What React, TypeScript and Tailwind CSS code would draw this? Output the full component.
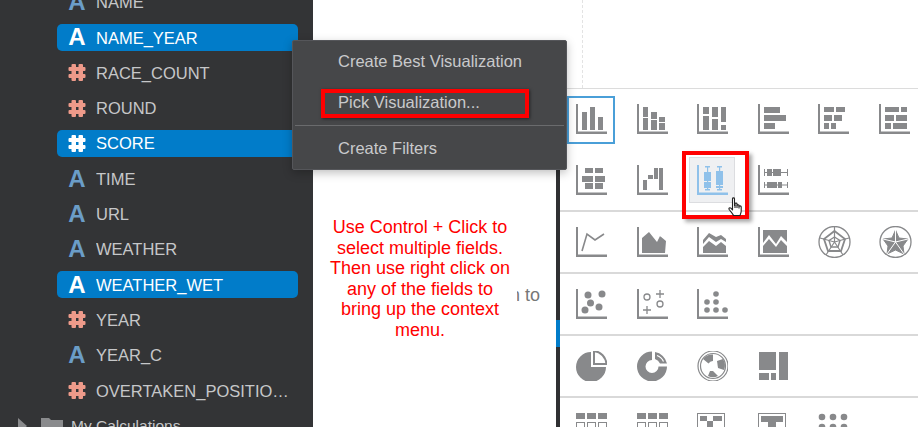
import type { ReactNode } from "react";

const fields = [
  { name: "NAME", type: "text" },
  { name: "NAME_YEAR", type: "text", selected: true },
  { name: "RACE_COUNT", type: "num" },
  { name: "ROUND", type: "num" },
  { name: "SCORE", type: "num", selected: true },
  { name: "TIME", type: "text" },
  { name: "URL", type: "text" },
  { name: "WEATHER", type: "text" },
  { name: "WEATHER_WET", type: "text", selected: true },
  { name: "YEAR", type: "num" },
  { name: "YEAR_C", type: "text" },
  { name: "OVERTAKEN_POSITIONS", type: "num" },
];

const HashIcon = ({ className }: { className: string }) => (
  <svg viewBox="0 0 17 17" className={`h-[17px] w-[18px] ${className}`} fill="currentColor">
    <rect x="3" y="0" width="4.5" height="17" rx="1" />
    <rect x="10" y="0" width="4.5" height="17" rx="1" />
    <rect x="0" y="3" width="17" height="4" rx="1" />
    <rect x="0" y="10" width="17" height="4" rx="1" />
  </svg>
);

const FieldRow = ({ name, type, selected }: { name: string; type: string; selected?: boolean }) => (
  <div className="flex h-[35.3px] shrink-0 items-center pl-[57px] pr-[15px]">
    <div className={`flex h-[27px] w-full items-center rounded-[5px] pl-[11px] pr-2 ${selected ? "bg-[#017cc9] text-white" : "text-[#c6c7c9]"}`}>
      {type === "text" ? (
        <span className={`w-[18px] text-center text-[24px] font-bold leading-none ${selected ? "text-white" : "text-[#6b9dc7]"}`}>A</span>
      ) : (
        <HashIcon className={selected ? "text-white" : "text-[#ee9a8a]"} />
      )}
      <span className="ml-[10px] min-w-0 flex-1 truncate pt-px text-[16.5px]">{name}</span>
    </div>
  </div>
);

// every chart glyph is 31x30 with the same axis unless it is a pie or radar
const ChartSvg = ({ children, axis = true, color = "#88898b" }: { children: ReactNode; axis?: boolean; color?: string }) => (
  <svg viewBox="0 0 31 30" width="31" height="30" fill={color} className="relative block">
    {axis && (
      <>
        <rect x="0" y="0" width="2" height="30" />
        <rect x="0" y="27.5" width="31" height="2.5" />
      </>
    )}
    {children}
  </svg>
);

const R = ({ b }: { b: number[][] }) => (
  <>
    {b.map(([x, y, w, h], i) => (
      <rect key={i} x={x} y={y} width={w} height={h} />
    ))}
  </>
);

const Radar = ({ filled }: { filled?: boolean }) => (
  <svg viewBox="0 0 33 32" width="33" height="32" className="relative -mt-px block" fill="none" stroke="#88898b">
    <circle cx="16.5" cy="16" r="15.5" strokeWidth="1.3" />
    {filled ? (
      <>
        <path d="M16.5 4L20 12L29 13L24 20L25 28L16.5 24L8 28L9 20L4 13L13 12Z" fill="#88898b" strokeWidth="1" />
        <path d="M16.5 4V16M29 13L16.5 16M25 28L16.5 16M8 28L16.5 16M4 13L16.5 16" stroke="#fff" strokeWidth="1" />
      </>
    ) : (
      <>
        <path d="M16.5 1V16M31 12L16.5 16M25 29L16.5 16M8 29L16.5 16M2 12L16.5 16" strokeWidth="1.2" />
        <path d="M16.5 5L27 13L23 25L10 25L6 13Z" strokeWidth="1.8" />
        <path d="M16.5 11L22 14.5L20 21L13 21L11 14.5Z" strokeWidth="1.4" />
      </>
    )}
  </svg>
);

const Cell = ({ children }: { children?: ReactNode }) => <div className="relative h-[30px] w-[31px]">{children}</div>;

const Sep = () => <div className="mt-[15px] h-[2px] bg-[#d9d9d9]" />;

const IconRow = ({ children }: { children: ReactNode }) => (
  <div className="grid grid-cols-[repeat(6,31px)] gap-x-[29.5px] gap-y-[31px] pl-4 pt-[15px]">{children}</div>
);

const HandCursor = () => (
  <svg viewBox="0 0 16 20" width="16" height="20" className="block" fill="#fff" stroke="#222" strokeWidth="1.1" strokeLinejoin="round">
    <path d="M4.5 1.8C4.5 .6 6.5 .6 6.5 1.8V8.5L7 8V6.8C7 5.8 9 5.8 9 6.8V8.5C9 7.5 11 7.5 11 8.5V9.5C11 8.6 13.2 8.6 13.2 9.7V14C13.2 16 12.4 17 12 18.5H5.5C5 17 3.8 15.8 1.2 12.5C.4 11.2 1.8 10.2 2.9 11.2L4.5 13Z" />
    <path d="M7 8V11M9 8.5V11M11 9.5V11.5" fill="none" />
  </svg>
);

const gridIcon = (
  <ChartSvg axis={false}>
    <R b={[[0, 0, 9, 6], [11, 0, 9, 6], [22, 0, 9, 6]]} />
    <g fill="none" stroke="#88898b">
      <rect x=".5" y="9.5" width="8" height="6" />
      <rect x="11.5" y="9.5" width="8" height="6" />
      <rect x="22.5" y="9.5" width="8" height="6" />
    </g>
  </ChartSvg>
);

export default function App() {
  return (
    <div className="relative flex h-[427px] w-[918px] overflow-hidden bg-white font-['Liberation_Sans',Arial,sans-serif]">
      {/* data pane */}
      <div className="w-[313px] shrink-0 overflow-hidden bg-[#333436]">
        <div className="-mt-[15.5px] flex flex-col">
          {fields.map((f) => (
            <FieldRow key={f.name} name={f.name} type={f.type} selected={f.selected} />
          ))}
          <div className="flex h-[35px] shrink-0 items-center pl-[18px] text-[15.5px] text-[#c6c7c9]">
            <span className="h-0 w-0 border-y-[8px] border-l-[9px] border-y-transparent border-l-[#8a8b8d]" />
            <svg viewBox="0 0 22 17" width="22" height="17" className="ml-[14px]" fill="#8a8b8d">
              <path d="M0 1h8l2 2h12v14H0z" />
            </svg>
            <span className="ml-2">My Calculations</span>
          </div>
        </div>
      </div>

      {/* canvas */}
      <div className="relative w-[243px] shrink-0">
        <div className="absolute left-[197px] top-[285px] text-[18px] leading-5 text-[#777]">n to</div>
        <div className="absolute left-[7px] top-[217px] w-[197px] bg-white pl-[8px] pr-[5px] text-center text-[18px] leading-[20.5px] text-[#ff0000]">
          Use Control + Click to select multiple fields. Then use right click on any of the fields to bring up the context menu.
        </div>
      </div>

      {/* right column with the picker */}
      <div className="flex min-w-0 flex-1 flex-col">
        <div className="flex h-[88px] shrink-0 pl-[26px]">
          <div className="border-l border-dashed border-[#e3e3e3]" />
        </div>
        <div className="flex min-h-0 flex-1 border-t border-[#dcdcdc]">
          <div className="relative flex w-1 shrink-0 flex-col bg-[#2f3032]">
            <div className="absolute -top-px left-0 h-[2px] w-[10px] bg-[#017cc9]" />
            <div className="h-[11px] bg-[#017cc9]" />
            <div className="mt-[220px] h-[27px] bg-[#017cc9]" />
          </div>
          <div className="min-w-0 flex-1 bg-white">
            <IconRow>
              <Cell>
                <div className="absolute -bottom-[10px] -left-[9px] -right-[8px] -top-[8px] border-2 border-[#4a9fd8]" />
                <ChartSvg><R b={[[6, 8, 5, 18], [14, 3, 5, 23], [22, 13, 5, 13]]} /></ChartSvg>
              </Cell>
              <Cell><ChartSvg><R b={[[6, 3, 5, 10], [6, 14, 5, 12], [14, 8, 6, 7], [14, 16, 6, 10], [22, 13, 6, 5], [22, 19, 6, 7]]} /></ChartSvg></Cell>
              <Cell><ChartSvg><R b={[[6, 3, 6, 7], [6, 12, 6, 14], [15, 3, 6, 10], [15, 15, 6, 11], [24, 3, 5, 15], [24, 21, 5, 5]]} /></ChartSvg></Cell>
              <Cell><ChartSvg><R b={[[6, 3, 16, 6], [6, 11, 22, 6], [6, 19, 11, 6]]} /></ChartSvg></Cell>
              <Cell><ChartSvg><R b={[[6, 3, 10, 5], [18, 3, 9, 5], [6, 11, 8, 6], [16, 11, 8, 6], [6, 19, 5, 6], [13, 19, 5, 6]]} /></ChartSvg></Cell>
              <Cell><ChartSvg><R b={[[6, 3, 14, 5], [22, 3, 6, 5], [6, 11, 9, 6], [17, 11, 11, 6], [6, 19, 6, 6], [14, 19, 14, 6]]} /></ChartSvg></Cell>
              <Cell><ChartSvg><R b={[[9, 3, 8, 5], [19, 3, 8, 5], [6, 11, 11, 6], [19, 11, 10, 6], [9, 18, 8, 6], [19, 18, 8, 6]]} /></ChartSvg></Cell>
              <Cell><ChartSvg><R b={[[6, 15, 4, 10], [11, 10, 5, 4], [17, 3, 4, 11], [22, 3, 4, 22]]} /></ChartSvg></Cell>
              <Cell>
                <div className="absolute -bottom-[8px] -left-[8px] -right-[7px] -top-[8px] border border-[#dcdde0] bg-[#eff0f2]" />
                <ChartSvg color="#8fc1ea">
                  <R b={[[8, 1, 5, 1.5], [10, 1, 1.2, 24], [8, 24, 5, 1.5], [7, 7, 7, 9], [7, 17, 7, 6], [20, 1, 5, 1.5], [22, 1, 1.2, 24], [20, 24, 5, 1.5], [19, 6, 7, 14], [19, 21, 7, 2]]} />
                </ChartSvg>
                <div className="absolute -bottom-[24px] -left-[15px] -right-[21px] -top-[14px] border-4 border-[#ff0000] shadow-[3px_3px_4px_rgba(0,0,0,0.35)]" />
                <div className="absolute left-[31px] top-[32px] z-10"><HandCursor /></div>
              </Cell>
              <Cell>
                <ChartSvg>
                  <R b={[[6, 4, 1, 7], [6, 7, 24, 1], [9, 4, 5, 7], [15, 4, 8, 7], [29, 4, 1, 7], [6, 17, 1, 6], [6, 19.5, 24, 1], [9, 17, 10, 6], [20, 17, 4, 6], [29, 17, 1, 6]]} />
                </ChartSvg>
              </Cell>
            </IconRow>
            <Sep />
            <IconRow>
              <Cell>
                <ChartSvg>
                  <polyline points="6,24 11,7 19,13 28,7" fill="none" stroke="#88898b" strokeWidth="1.6" />
                </ChartSvg>
              </Cell>
              <Cell><ChartSvg><path d="M5 25V11L12 5L20 15L23 9L29 14L28 26H5Z" /><path d="M18 6L24 9L29 12" stroke="#fff" fill="none" /></ChartSvg></Cell>
              <Cell><ChartSvg><path d="M6 13L12 6L19 10L24 8L29 12V15L24 12L19 15L12 10L6 17Z" /><path d="M6 20L12 14L19 19L24 15L29 19V26H6Z" /></ChartSvg></Cell>
              <Cell><ChartSvg><path d="M5 3H29V15L23 9L18 17L11 8L5 16Z" /><path d="M5 19L11 12L18 20L23 13L29 19V26H5Z" /></ChartSvg></Cell>
              <Cell><Radar /></Cell>
              <Cell><Radar filled /></Cell>
            </IconRow>
            <Sep />
            <IconRow>
              <Cell>
                <ChartSvg>
                  <circle cx="12" cy="6" r="3.5" /><circle cx="26" cy="5" r="3.5" /><circle cx="14.5" cy="14" r="3.5" /><circle cx="23" cy="18" r="3.5" /><circle cx="9" cy="21" r="3.5" />
                </ChartSvg>
              </Cell>
              <Cell>
                <ChartSvg>
                  <g fill="none" stroke="#88898b" strokeWidth="1.3">
                    <circle cx="10" cy="8" r="3" /><circle cx="23" cy="15" r="3" />
                    <path d="M23 1V9M19 5H27M10 17V25M6 21H14" />
                  </g>
                </ChartSvg>
              </Cell>
              <Cell>
                <ChartSvg>
                  <circle cx="19" cy="5" r="2.8" /><circle cx="10" cy="13" r="2.8" /><circle cx="19" cy="13" r="2.8" /><circle cx="10" cy="21" r="2.8" /><circle cx="19" cy="21" r="2.8" /><circle cx="28" cy="21" r="2.8" />
                </ChartSvg>
              </Cell>
            </IconRow>
            <Sep />
            <IconRow>
              <Cell>
                <ChartSvg axis={false}>
                  <path d="M15 1V16H30A15 15 0 1 1 15 1Z" />
                  <path d="M18 0A14 14 0 0 1 30.5 13H18Z" fill="none" stroke="#88898b" strokeWidth="2" />
                </ChartSvg>
              </Cell>
              <Cell>
                <ChartSvg axis={false}>
                  <path d="M15 .5V9A6.5 6.5 0 1 0 21.5 15.5H30A15 15 0 1 1 15 .5Z" />
                  <path d="M18 1A14.7 14.7 0 0 1 30 12.5H23A8 8 0 0 0 18 8Z" />
                  <path d="M20 4.5A11 11 0 0 1 26.5 10.5" fill="none" stroke="#fff" strokeWidth="1.2" />
                </ChartSvg>
              </Cell>
              <Cell>
                <ChartSvg axis={false}>
                  <g fill="none" stroke="#88898b">
                    <circle cx="16" cy="15" r="15" strokeWidth="1.2" />
                    <circle cx="16" cy="15" r="12.5" strokeWidth="1.2" />
                  </g>
                  <path d="M6 8A11.5 11.5 0 0 1 16 3.5V10A5 5 0 0 0 11.5 12.5Z" />
                  <path d="M20 10L26 8A11.5 11.5 0 0 1 27 19L21 17Z" />
                  <path d="M13 20L16 20L21 25A11.5 11.5 0 0 1 11 25Z" />
                </ChartSvg>
              </Cell>
              <Cell>
                <ChartSvg axis={false}>
                  <R b={[[1, 1, 17, 18], [21, 1, 9, 28], [1, 22, 10, 7], [13, 22, 5, 7]]} />
                </ChartSvg>
              </Cell>
            </IconRow>
            <Sep />
            <IconRow>
              <Cell>{gridIcon}</Cell>
              <Cell>{gridIcon}</Cell>
              <Cell>
                <ChartSvg axis={false}>
                  <rect x=".5" y=".5" width="27" height="29" fill="none" stroke="#88898b" />
                  <R b={[[3, 3, 7, 5], [16, 3, 9, 5], [10, 8, 6, 6], [3, 14, 7, 6]]} />
                </ChartSvg>
              </Cell>
              <Cell>
                <ChartSvg axis={false}>
                  <rect x=".5" y=".5" width="27" height="29" fill="none" stroke="#88898b" />
                  <R b={[[3, 3, 22, 6], [10, 9, 8, 12]]} />
                </ChartSvg>
              </Cell>
              <Cell>
                <ChartSvg axis={false}>
                  <circle cx="4" cy="4" r="3.3" /><circle cx="15" cy="4" r="3.3" /><circle cx="26" cy="4" r="3.3" /><circle cx="4" cy="14" r="3.3" /><circle cx="15" cy="14" r="3.3" /><circle cx="26" cy="14" r="3.3" />
                </ChartSvg>
              </Cell>
            </IconRow>
          </div>
        </div>
      </div>

      {/* context menu */}
      <div className="absolute left-[292px] top-[40px] z-20 h-[130px] w-[275px] rounded-[2px] border border-[#55565a] bg-[#464749] text-[16.5px] text-[#c9cacc] shadow-[0_3px_10px_rgba(0,0,0,0.25)]">
        <div className="flex h-[41px] items-center pl-[45px]">Create Best Visualization</div>
        <div className="ml-[28px] mt-[7px] flex h-[29px] w-[208px] items-center border-4 border-[#ff0000] pb-[3px] pl-[13px] shadow-[1px_1px_3px_rgba(0,0,0,0.5)]">
          Pick Visualization...
        </div>
        <div className="mx-[2px] mt-[7px] h-px bg-[#6a6b6d]" />
        <div className="flex h-[44px] items-center pl-[45px]">Create Filters</div>
      </div>
    </div>
  );
}
